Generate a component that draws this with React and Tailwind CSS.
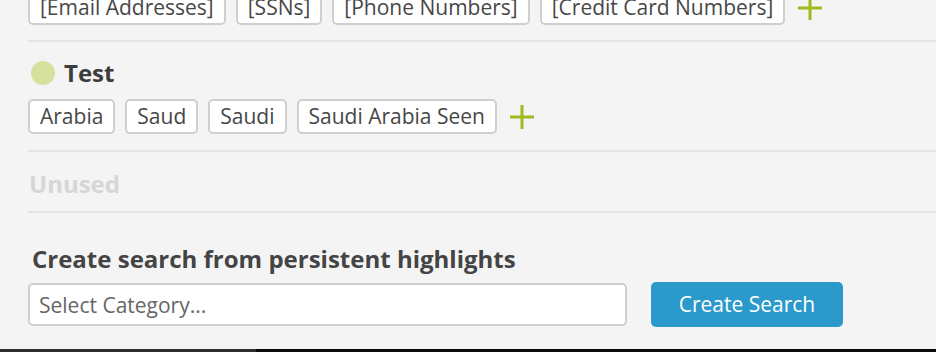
import { useState } from 'react';

function Tag({ label }) {
  return (
    <span className="flex h-[35px] items-center rounded-[5px] border-2 border-[#cfcfcf] bg-white px-[10px] text-[21px] leading-none text-[#474747]">
      {label}
    </span>
  );
}

function PlusIcon() {
  return (
    <svg width="24" height="24" viewBox="0 0 24 24" className="ml-[3px] shrink-0">
      <path d="M12 0V24M0 12H24" stroke="#9dbb1c" strokeWidth="3" />
    </svg>
  );
}

function TagRow({ tags, className = '' }) {
  return (
    <div className={`flex items-center gap-[10px] ${className}`}>
      {tags.map((t) => (
        <Tag key={t} label={t} />
      ))}
      <PlusIcon />
    </div>
  );
}

export default function App() {
  const [category, setCategory] = useState('');

  return (
    <div className="flex h-[352px] w-[936px] flex-col overflow-hidden bg-[#f4f4f4] font-['Open_Sans',sans-serif]">
      <div className="flex-1 pl-[28px]">
        <TagRow tags={['[Email Addresses]', '[SSNs]', '[Phone Numbers]', '[Credit Card Numbers]']} className="mt-[-10px]" />
        <div className="mt-[15px] h-[2px] bg-[#e3e3e3]" />

        {/* Test category */}
        <div className="mt-[15px] flex h-[32px] items-center gap-[9px] pl-[3px]">
          <span className="size-[24px] rounded-full bg-[#d5e19c]" />
          <span className="text-[24px] leading-[32px] font-bold text-[#3c3c3c]">Test</span>
        </div>
        <TagRow tags={['Arabia', 'Saud', 'Saudi', 'Saudi Arabia Seen']} className="mt-[10px]" />
        <div className="mt-[16px] h-[2px] bg-[#e3e3e3]" />

        <div className="mt-[16px] pl-[1px] text-[24px] leading-[32px] font-bold text-[#d6d6d6]">Unused</div>
        <div className="mt-[11px] h-[2px] bg-[#e3e3e3]" />

        {/* create search */}
        <div className="mt-[30px] pl-[4px] text-[24px] leading-[32px] font-bold text-[#444]">Create search from persistent highlights</div>
        <div className="mt-[7px] flex items-center gap-[24px]">
          <input
            value={category}
            onChange={(e) => setCategory(e.target.value)}
            placeholder="Select Category..."
            className="h-[43px] w-[599px] rounded-[5px] border-2 border-[#cfcfcf] bg-white px-[9px] text-[21px] text-[#444] outline-none placeholder:text-[#666]"
          />
          <button className="h-[45px] w-[192px] rounded-[5px] bg-[#2b9acb] text-[21px] text-white">Create Search</button>
        </div>
      </div>
      <div className="flex h-[3px]">
        <div className="w-[256px] bg-[#2e2e30]" />
        <div className="flex-1 bg-[#0b0b0b]" />
      </div>
    </div>
  );
}
